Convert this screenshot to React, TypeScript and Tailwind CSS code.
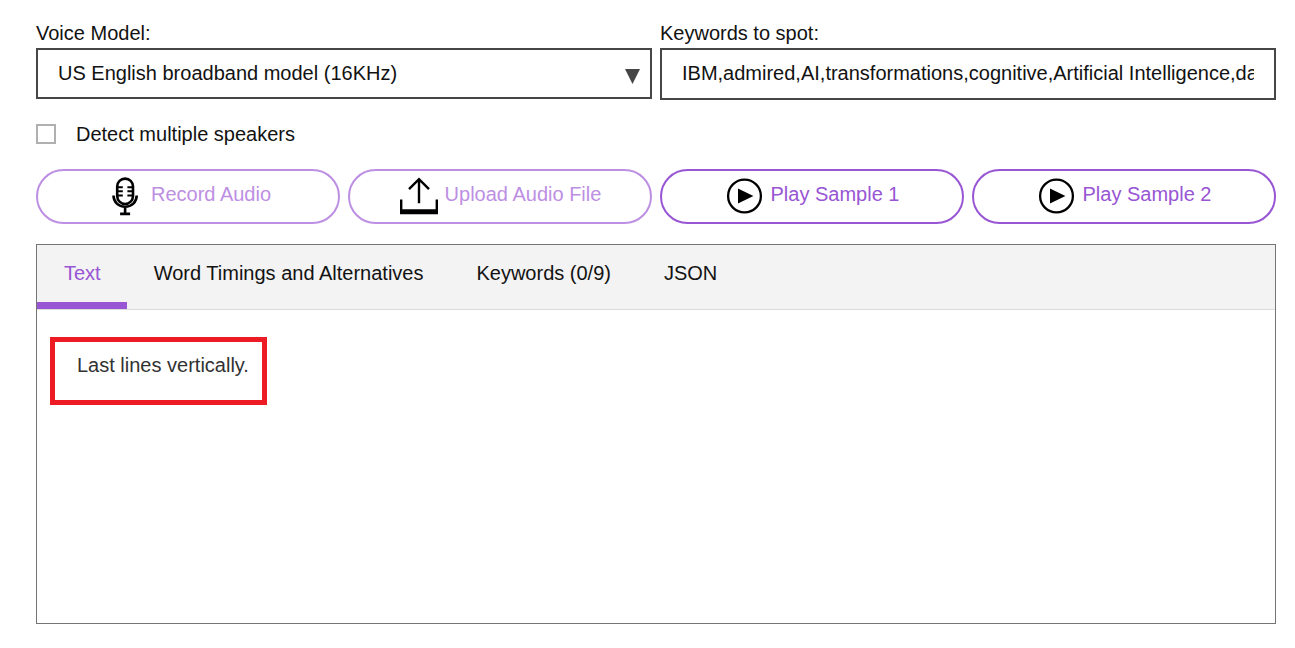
import { useState } from 'react';
import type { ReactNode } from 'react';

function MicIcon() {
  return (
    <svg className="h-10 w-10 shrink-0" viewBox="0 0 40 40" fill="none" stroke="#000" strokeWidth="2.6" aria-hidden="true">
      <rect x="12.2" y="2.6" width="15.8" height="25.4" rx="7.9" />
      <path d="M12 11.2h5.8M12 15.3h5.8M12 19.4h5.8M28.2 11.2h-5.8M28.2 15.3h-5.8M28.2 19.4h-5.8" strokeWidth="2" />
      <path d="M8.5 19.6c0 6.6 5.1 11.2 11.6 11.2s11.6-4.6 11.6-11.2M20.1 31v7M15.1 37.9h10" />
    </svg>
  );
}

function UploadIcon() {
  return (
    <svg className="h-10 w-10 shrink-0" viewBox="0 0 40 40" fill="none" stroke="#000" strokeWidth="2.4" aria-hidden="true">
      <path d="M20 27.3V3M10 13.1L20 3.1l10 10" />
      <path d="M2.2 23.4V38M37.8 23.4V38" />
      <path d="M1 35.8h38" strokeWidth="5" />
    </svg>
  );
}

function PlayIcon() {
  return (
    <svg className="h-10 w-10 shrink-0" viewBox="0 0 40 40" aria-hidden="true">
      <circle cx="19.5" cy="20" r="16.4" fill="none" stroke="#000" strokeWidth="2.3" />
      <path d="M13 12.5L28.4 20L13 27.5z" />
    </svg>
  );
}

function ActionButton({ icon, label, disabled = false }: { icon: ReactNode; label: string; disabled?: boolean }) {
  return (
    <button
      type="button"
      disabled={disabled}
      className={
        disabled
          ? 'flex h-[55px] items-center justify-center gap-1.5 rounded-full border-2 border-[#bd8fe3] pb-px text-[#bd8fe3]'
          : 'flex h-[55px] items-center justify-center gap-1.5 rounded-full border-2 border-[#9855d4] pb-px text-[#9855d4]'
      }
    >
      {icon}
      <span className="pb-1">{label}</span>
    </button>
  );
}

const tabs = ['Text', 'Word Timings and Alternatives', 'Keywords (0/9)', 'JSON'];

export default function App() {
  const [tab, setTab] = useState('Text');
  return (
    <main className="min-h-screen bg-white pt-[18px] pr-[19px] pb-6 pl-9 font-['Liberation_Sans',Arial,sans-serif] text-[20px] leading-[30px] text-[#121212]">
      <div className="grid grid-cols-2 items-start gap-2">
        <div>
          <label htmlFor="model" className="block">Voice Model:</label>
          <div className="relative">
            <select
              id="model"
              className="block h-[51px] w-full appearance-none rounded-none border-2 border-[#464646] bg-white pr-12 pb-0.5 pl-5"
            >
              <option>US English broadband model (16KHz)</option>
            </select>
            <svg className="pointer-events-none absolute top-[21px] right-3 h-[15px] w-[15px]" viewBox="0 0 15 15" fill="#464646" aria-hidden="true">
              <path d="M0 0h15L7.5 15z" />
            </svg>
          </div>
        </div>
        <div>
          <label htmlFor="keywords" className="block">Keywords to spot:</label>
          <input
            id="keywords"
            type="text"
            defaultValue="IBM,admired,AI,transformations,cognitive,Artificial Intelligence,data,predict,learn"
            className="block h-[52px] w-full border-2 border-[#464646] bg-white px-5 pb-0.5"
          />
        </div>
      </div>

      <div className="mt-[19px] flex items-center gap-5">
        <input
          id="speakers"
          type="checkbox"
          className="h-5 w-5 appearance-none border-2 border-[#b0b0b0] bg-white checked:bg-[#9855d4]"
        />
        <label htmlFor="speakers">Detect multiple speakers</label>
      </div>

      <div className="mt-5 grid grid-cols-4 gap-2">
        <ActionButton icon={<MicIcon />} label="Record Audio" disabled />
        <ActionButton icon={<UploadIcon />} label="Upload Audio File" disabled />
        <ActionButton icon={<PlayIcon />} label="Play Sample 1" />
        <ActionButton icon={<PlayIcon />} label="Play Sample 2" />
      </div>

      <section className="mt-5 min-h-[380px] border border-[#757575]">
        <div role="tablist" className="flex border-b border-[#dcdcdc] bg-[#f3f3f3]">
          {tabs.map((name) => (
            <button
              key={name}
              type="button"
              role="tab"
              aria-selected={tab === name}
              onClick={() => setTab(name)}
              className={
                tab === name
                  ? 'h-16 border-b-[7px] border-[#9855d4] pr-[26px] pb-0.5 pl-[27px] text-[#9855d4]'
                  : 'h-16 border-b-[7px] border-transparent pr-[26px] pb-0.5 pl-[27px]'
              }
            >
              {name}
            </button>
          ))}
        </div>
        <div role="tabpanel" className="px-[13px] pt-[27px]">
          <p className="inline-block h-[68px] w-[217px] border-[5px] border-[#ed1c24] px-[22px] pt-2 whitespace-nowrap text-[#323232]">
            Last lines vertically.
          </p>
        </div>
      </section>
    </main>
  );
}
